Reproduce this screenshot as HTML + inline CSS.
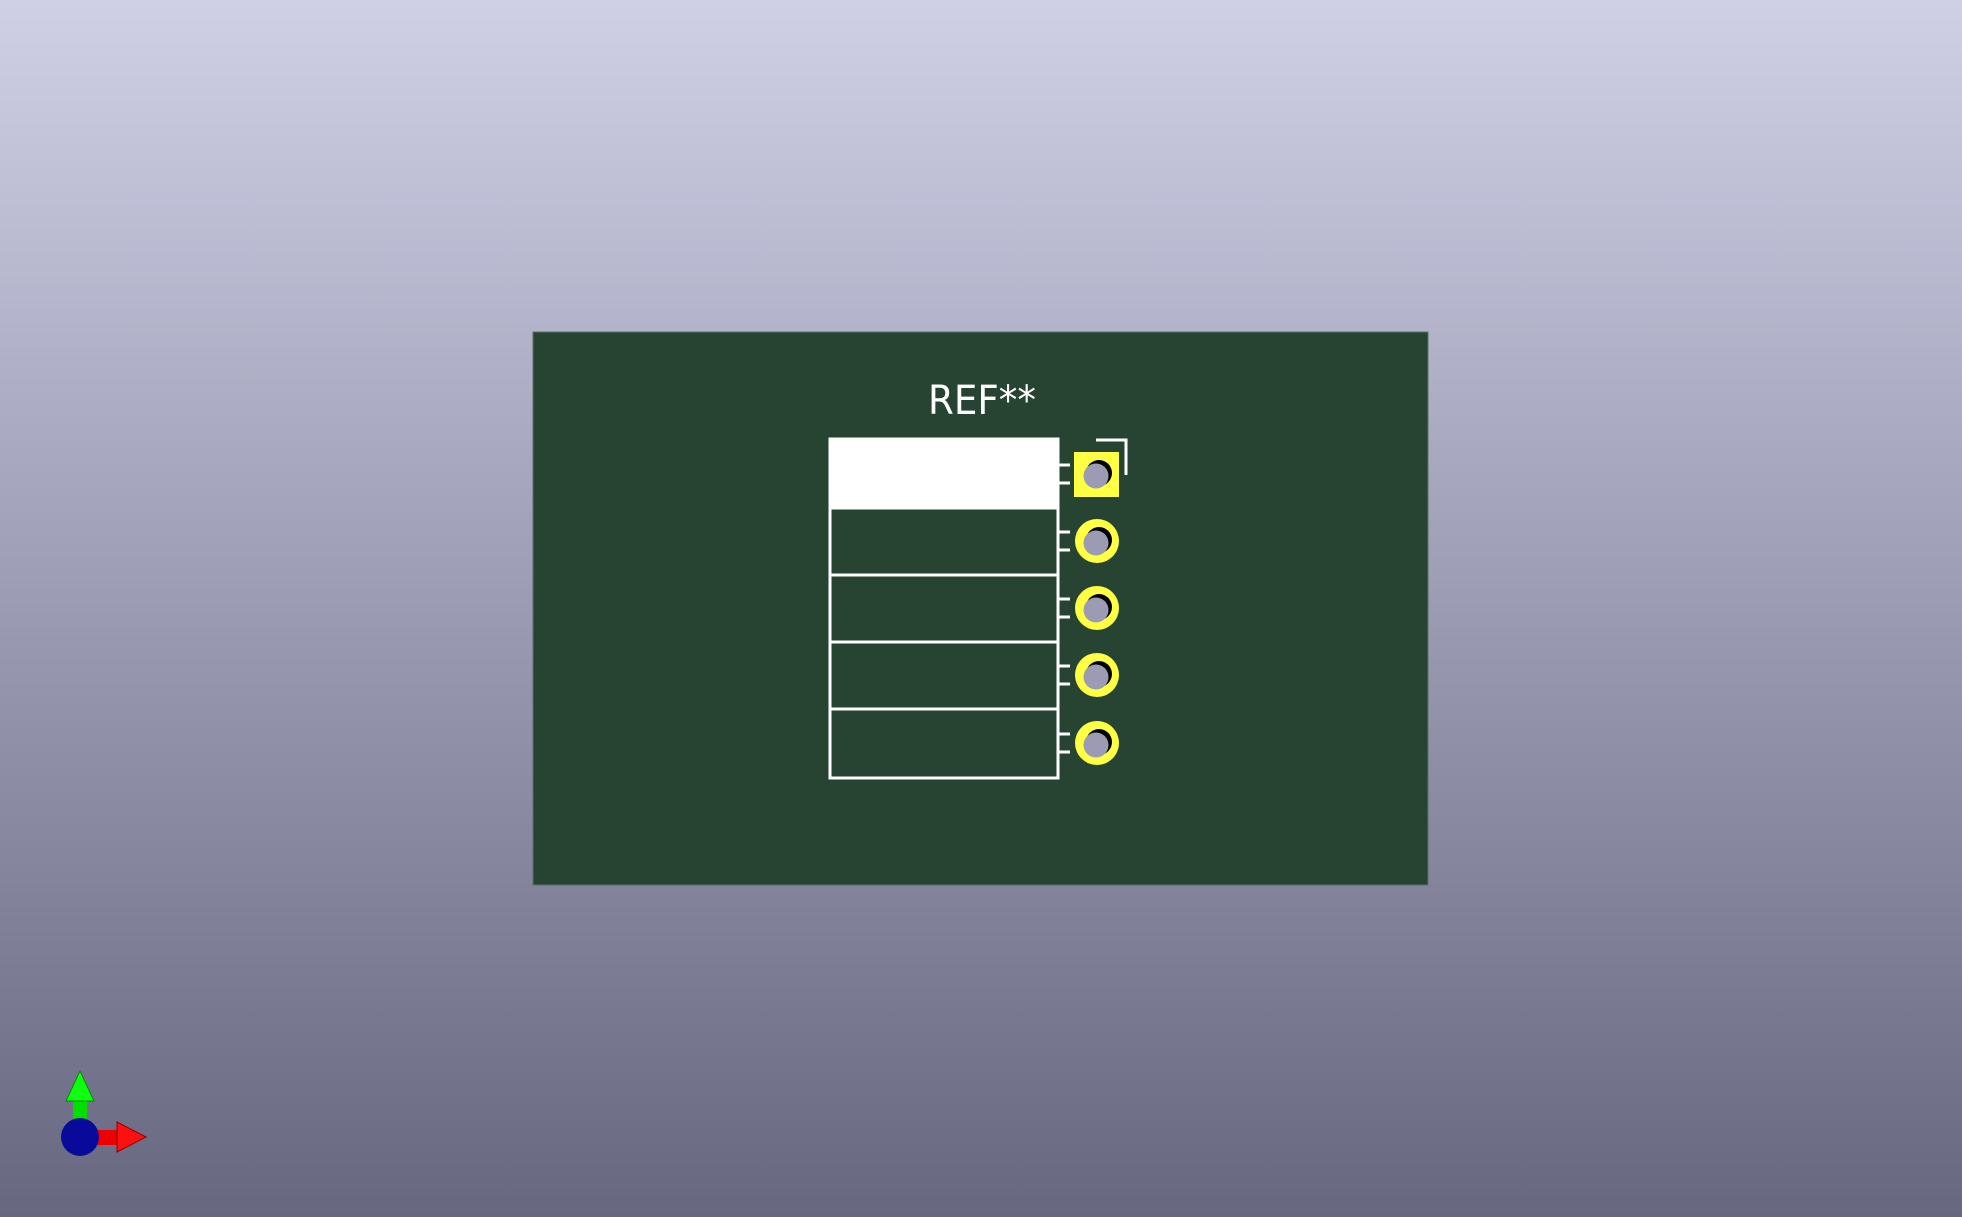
<!DOCTYPE html>
<html><head><meta charset="utf-8"><style>
html,body{margin:0;padding:0}
body{width:1962px;height:1217px;overflow:hidden;background:linear-gradient(#cfd0e6,#676780)}
</style></head><body>
<svg width="1962" height="1217" viewBox="0 0 1962 1217" style="position:absolute;left:0;top:0">
<defs>
<linearGradient id="g" x1="0" y1="0" x2="0" y2="1"><stop offset="0" stop-color="#cfd0e6"/><stop offset="1" stop-color="#676780"/></linearGradient>
</defs>
<rect width="1962" height="1217" fill="url(#g)"/>
<rect x="533" y="332" width="895" height="553" fill="#264431" stroke="#5a7070" stroke-width="1"/>
<text x="982" y="414" text-anchor="middle" font-family="DejaVu Sans, Liberation Sans, sans-serif" font-size="40" fill="#fff" textLength="108" lengthAdjust="spacingAndGlyphs" style="font-weight:400">REF**</text>
<rect x="829" y="438" width="230" height="71" fill="#fff"/>
<g stroke="#fff" stroke-width="3" fill="none">
<rect x="830" y="439" width="228" height="339"/>
<line x1="830" y1="508" x2="1058" y2="508"/>
<line x1="830" y1="575" x2="1058" y2="575"/>
<line x1="830" y1="642" x2="1058" y2="642"/>
<line x1="830" y1="709" x2="1058" y2="709"/>
<polyline points="1096,440 1126,440 1126,475"/>
<g id="t"><line x1="1058" y1="465" x2="1070" y2="465"/><line x1="1058" y1="483" x2="1070" y2="483"/></g>
<use href="#t" y="67"/><use href="#t" y="134"/><use href="#t" y="201"/><use href="#t" y="269"/>
</g>
<rect x="1074" y="452" width="45" height="45" fill="#ffff44"/>
<g fill="#ffff44"><circle cx="1097" cy="541" r="22"/><circle cx="1097" cy="608" r="22"/><circle cx="1097" cy="675" r="22"/><circle cx="1097" cy="743" r="22"/></g>
<g fill="#000"><circle cx="1099" cy="473" r="13"/><circle cx="1099" cy="540" r="13"/><circle cx="1099" cy="607" r="13"/><circle cx="1099" cy="674" r="13"/><circle cx="1099" cy="742" r="13"/></g>
<g fill="#9b9bb4"><circle cx="1096" cy="476" r="12.5"/><circle cx="1096" cy="543" r="12.5"/><circle cx="1096" cy="610" r="12.5"/><circle cx="1096" cy="677" r="12.5"/><circle cx="1096" cy="745" r="12.5"/></g>
<rect x="73" y="1098" width="14" height="26" fill="#00e000"/>
<polygon points="80,1071 66,1101 94,1101" fill="#10ff10" stroke="#009000" stroke-width="1"/>
<rect x="95" y="1130" width="24" height="15" fill="#ee0000"/>
<polygon points="146,1137 117,1122 117,1152" fill="#ff1010" stroke="#900000" stroke-width="1"/>
<circle cx="80" cy="1137" r="19" fill="#0a0a9a"/>
</svg>
</body></html>
